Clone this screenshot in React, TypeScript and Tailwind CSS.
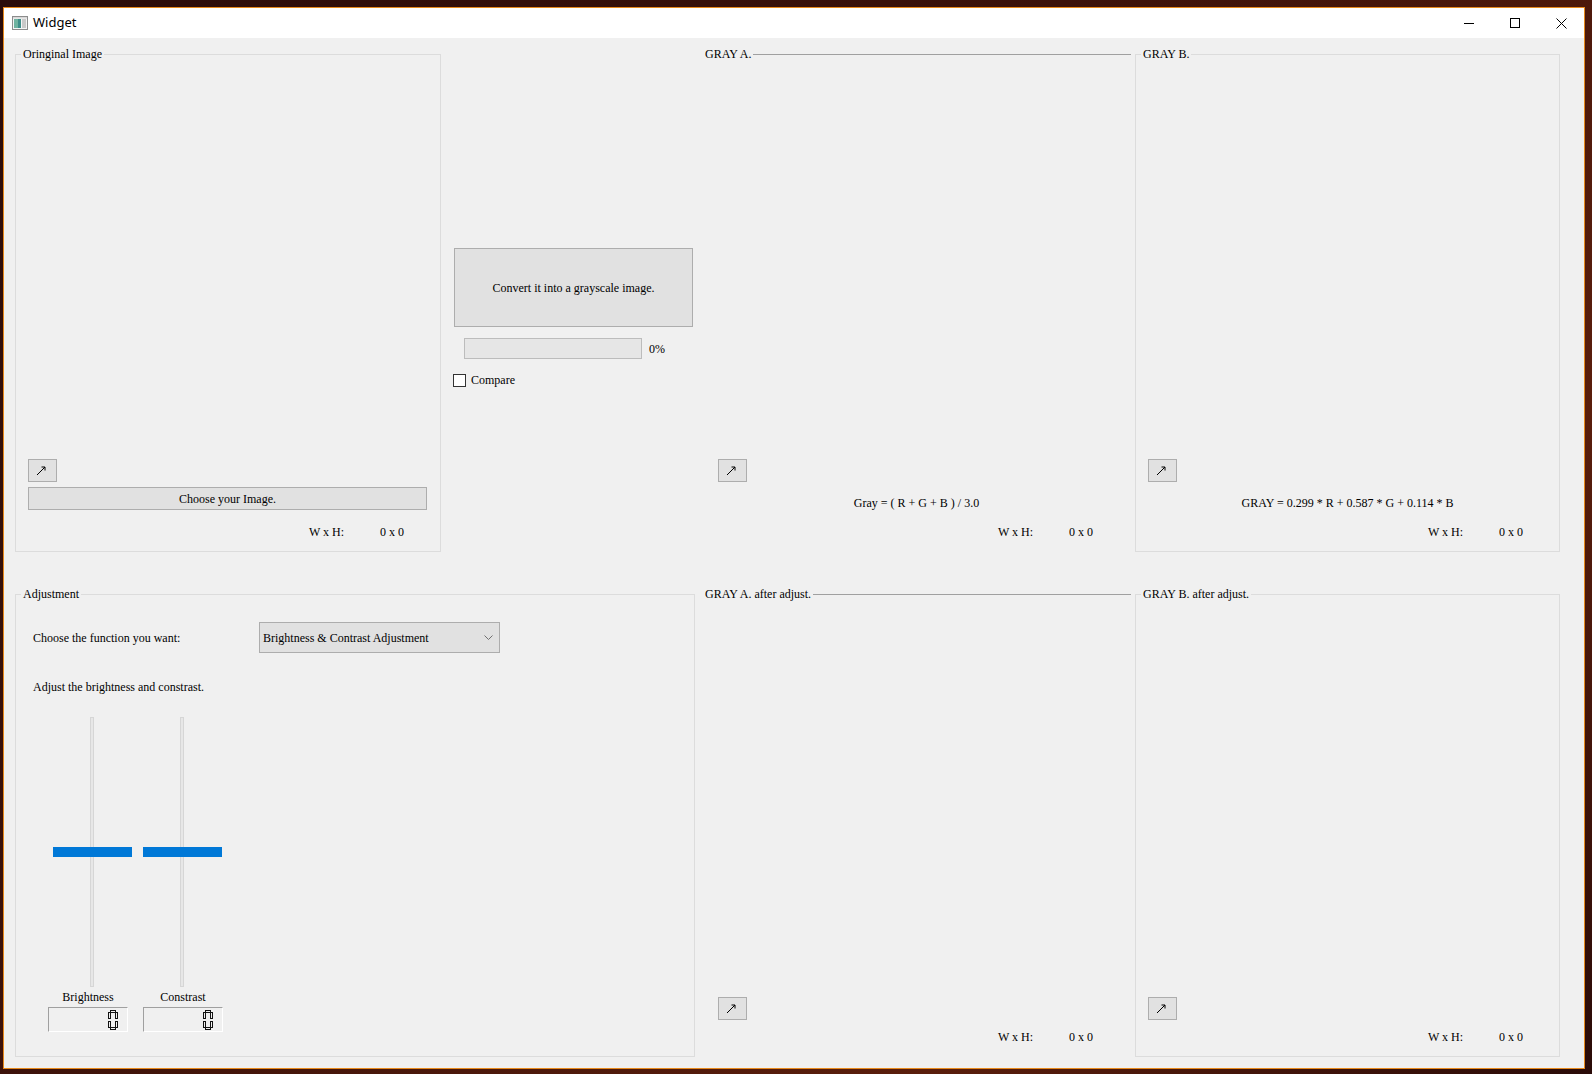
import React from 'react';

function ArrowButton() {
  return (
    <button
      type="button"
      className="flex h-[23px] w-[29px] items-center justify-center border border-[#adadad] bg-[#e1e1e1]"
    >
      <svg width="10" height="10" viewBox="0 0 10 10" fill="none" className="-ml-[3px]">
        <path d="M1 9 L9 1" stroke="#000" strokeWidth="1" />
        <path d="M5.5 1 H9 V4.5" stroke="#000" strokeWidth="1" />
      </svg>
    </button>
  );
}

function SizeRow({ flat = false }: { flat?: boolean }) {
  return (
    <div className={`flex h-[16px] items-center justify-end ${flat ? 'pr-[32px]' : 'pr-[30px]'}`}>
      <span className="w-[71px]">W x H:</span>
      <span className="w-[30px]">0 x 0</span>
    </div>
  );
}

function GroupBox({
  title,
  className,
  children,
}: {
  title: string;
  className: string;
  children: React.ReactNode;
}) {
  return (
    <fieldset className={`flex min-w-0 flex-col border border-[#dcdcdc] ${className}`}>
      <legend className="ml-[5px] px-[2px] text-[12px] leading-[16px]">{title}</legend>
      {children}
    </fieldset>
  );
}

function FlatGroup({
  title,
  className,
  children,
}: {
  title: string;
  className: string;
  children: React.ReactNode;
}) {
  return (
    <div className={`flex flex-col ${className}`}>
      <div className="flex h-[16px] items-center pl-[8px]">
        <span className="pr-[2px] leading-[16px]">{title}</span>
        <div className="h-px flex-1 bg-[#a0a0a0]" />
      </div>
      {children}
    </div>
  );
}

function VSlider() {
  return (
    <div className="relative h-[270px] w-[80px]">
      <div className="absolute left-[37px] top-0 h-full w-[4px] border border-[#d6d6d6] bg-[#e7e7e7]" />
      <div className="absolute left-0 top-[130px] h-[10px] w-[79px] bg-[#0078d7]" />
    </div>
  );
}

// QLCDNumber in Outline style, showing "0"
function Lcd() {
  return (
    <div className="flex h-[25px] w-[80px] items-center justify-end border border-b-white border-l-[#a0a0a0] border-r-white border-t-[#a0a0a0] pr-[9px]">
      <svg width="10" height="20" viewBox="0 0 10 20" fill="none" shapeRendering="crispEdges">
        <g stroke="#111" strokeWidth="1">
          <rect x="2.5" y="0.5" width="5" height="2" />
          <rect x="2.5" y="17.5" width="5" height="2" />
          <rect x="0.5" y="2.5" width="2" height="6" />
          <rect x="0.5" y="11.5" width="2" height="6" />
          <rect x="7.5" y="2.5" width="2" height="6" />
          <rect x="7.5" y="11.5" width="2" height="6" />
        </g>
      </svg>
    </div>
  );
}

function TitleBar() {
  return (
    <div className="flex h-[30px] items-center bg-white font-['Noto_Sans',sans-serif] text-[13px] text-black">
      <svg width="16" height="14" viewBox="0 0 16 14" className="ml-[8px]">
        <rect x="0.5" y="0.5" width="15" height="13" fill="#f4f4f4" stroke="#8c8c8c" />
        <rect x="2" y="3" width="7" height="9" fill="#3f8f8a" />
        <rect x="2" y="3" width="4" height="9" fill="#6fb3a0" />
        <rect x="10" y="3" width="4" height="9" fill="#c9c9c9" />
        <rect x="1" y="1" width="14" height="1.5" fill="#d8d8d8" />
      </svg>
      <span className="ml-[5px]">Widget</span>
      <div className="ml-auto flex h-full">
        <div className="flex h-full w-[46px] items-center justify-center">
          <div className="h-px w-[10px] bg-black" />
        </div>
        <div className="flex h-full w-[46px] items-center justify-center">
          <div className="h-[10px] w-[10px] border border-black" />
        </div>
        <div className="flex h-full w-[46px] items-center justify-center">
          <svg width="11" height="11" viewBox="0 0 11 11">
            <path d="M0.5 0.5 L10.5 10.5 M10.5 0.5 L0.5 10.5" stroke="#000" strokeWidth="1" />
          </svg>
        </div>
      </div>
    </div>
  );
}

export default function App() {
  return (
    <div className="h-[1074px] w-[1592px] overflow-hidden bg-[linear-gradient(135deg,#2a0c0a_0%,#3c120a_40%,#5a1e0c_75%,#2a0b08_100%)] pl-[3px] pt-[7px]">
      <div className="flex h-[1062px] w-[1582px] flex-col border border-[#e6891c] bg-[#f0f0f0]">
        <TitleBar />
        <div className="flex flex-col pl-[11px] pt-[8px] font-['Liberation_Serif','Times_New_Roman',serif] text-[12px] leading-[16px] text-black">
          {/* top row */}
          <div className="flex">
            <GroupBox title="Oringinal Image" className="h-[506px] w-[426px]">
              <div className="flex-1" />
              <div className="pl-[12px] pr-[13px]">
                <ArrowButton />
                <button
                  type="button"
                  className="mt-[5px] h-[23px] w-full border border-[#adadad] bg-[#e1e1e1]"
                >
                  Choose your Image.
                </button>
              </div>
              <div className="mb-[11px] mt-[14px]">
                <SizeRow />
              </div>
            </GroupBox>

            <div className="flex w-[256px] flex-col pl-[12px] pt-[202px]">
              <button
                type="button"
                className="ml-[1px] h-[79px] w-[239px] border border-[#adadad] bg-[#e1e1e1]"
              >
                Convert it into a grayscale image.
              </button>
              <div className="ml-[11px] mt-[11px] flex h-[21px] items-center">
                <div className="h-[21px] w-[178px] border border-[#bcbcbc] bg-[#e6e6e6]" />
                <span className="ml-[7px]">0%</span>
              </div>
              <label className="mt-[13px] flex items-center">
                <span className="h-[13px] w-[13px] border border-[#333333] bg-white" />
                <span className="ml-[5px]">Compare</span>
              </label>
            </div>

            <FlatGroup title="GRAY A." className="h-[506px] w-[434px]">
              <div className="flex-1" />
              <div className="pl-[21px]">
                <ArrowButton />
              </div>
              <div className="mt-[13px] h-[16px] pl-[5px] text-center">Gray = ( R + G + B ) / 3.0</div>
              <div className="mb-[12px] mt-[13px]">
                <SizeRow flat />
              </div>
            </FlatGroup>

            <GroupBox title="GRAY B." className="ml-[4px] h-[506px] w-[425px]">
              <div className="flex-1" />
              <div className="pl-[12px]">
                <ArrowButton />
              </div>
              <div className="mt-[13px] h-[16px] text-center">
                GRAY = 0.299 * R + 0.587 * G + 0.114 * B
              </div>
              <div className="mb-[11px] mt-[13px]">
                <SizeRow />
              </div>
            </GroupBox>
          </div>

          {/* bottom row */}
          <div className="mt-[34px] flex">
            <GroupBox title="Adjustment" className="h-[471px] w-[680px]">
              <div className="flex flex-col pl-[17px] pt-[20px]">
                <div className="flex items-center">
                  <span className="w-[226px]">Choose the function you want:</span>
                  <div className="flex h-[31px] w-[241px] items-center border border-[#adadad] bg-[#e1e1e1] pl-[3px] pr-[6px]">
                    <span className="flex-1">Brightness &amp; Contrast Adjustment</span>
                    <svg width="9" height="5" viewBox="0 0 9 5" fill="none">
                      <path d="M0.5 0.5 L4.5 4.5 L8.5 0.5" stroke="#707070" strokeWidth="1" />
                    </svg>
                  </div>
                </div>
                <div className="mt-[26px] h-[16px]">Adjust the brightness and constrast.</div>
                <div className="ml-[20px] mt-[22px] flex gap-[10px]">
                  <VSlider />
                  <VSlider />
                </div>
                <div className="ml-[15px] mt-[2px] flex gap-[15px]">
                  <div className="flex w-[80px] flex-col items-center">
                    <span className="h-[16px]">Brightness</span>
                    <div className="mt-[2px]">
                      <Lcd />
                    </div>
                  </div>
                  <div className="flex w-[80px] flex-col items-center">
                    <span className="h-[16px]">Constrast</span>
                    <div className="mt-[2px]">
                      <Lcd />
                    </div>
                  </div>
                </div>
              </div>
            </GroupBox>

            <FlatGroup title="GRAY A. after adjust." className="ml-[2px] h-[471px] w-[434px]">
              <div className="flex-1" />
              <div className="pl-[21px]">
                <ArrowButton />
              </div>
              <div className="mb-[12px] mt-[9px]">
                <SizeRow flat />
              </div>
            </FlatGroup>

            <GroupBox title="GRAY B. after adjust." className="ml-[4px] h-[471px] w-[425px]">
              <div className="flex-1" />
              <div className="pl-[12px]">
                <ArrowButton />
              </div>
              <div className="mb-[11px] mt-[9px]">
                <SizeRow />
              </div>
            </GroupBox>
          </div>
        </div>
      </div>
    </div>
  );
}
